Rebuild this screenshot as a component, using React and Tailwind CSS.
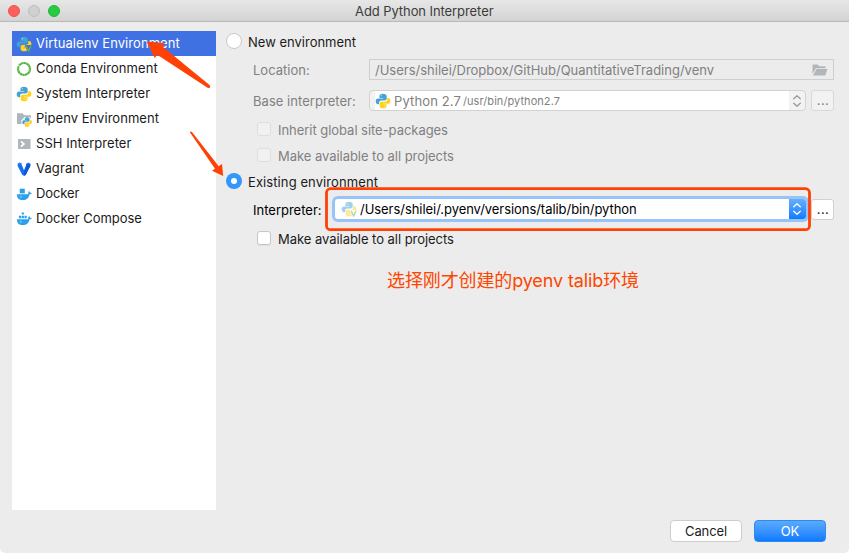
import React from "react";

function PythonShape() {
  return (
    <>
      <path
        fill="#43a3d6"
        d="M7.900 .8C5.500 .8 4.400 1.700 4.400 3.200V4.900h3.800v.5H3C1.500 5.400 .7 6.600 .7 8.300s.8 2.900 2.200 2.900h1.200V9.700c0-1.300.9-2.200 2.200-2.200h3.500c1.100 0 1.900-.8 1.900-1.900V3.200C11.700 1.700 10.400 .8 7.900 .8z"
      />
      <path
        fill="#ffd21f"
        d="M8.200 15.300c2.400 0 3.400-.9 3.400-2.400v-1.600H7.900v-.5h5.200c1.500 0 2.300-1.200 2.300-2.900s-.8-2.900-2.200-2.900h-1v1.600c0 1.300-.9 2.100-2.100 2.100H6.500c-1.100 0-1.900.8-1.900 1.900v2.300c0 1.500 1.200 2.400 3.600 2.400z"
      />
      <circle cx="6.300" cy="2.800" r=".5" fill="#fff" />
      <circle cx="9.800" cy="13.300" r=".5" fill="#fff" />
    </>
  );
}

function PythonIcon({ className = "size-4" }) {
  return (
    <svg viewBox="0 0 16 16" className={className}>
      <PythonShape />
    </svg>
  );
}

function VirtualenvIcon({ edge, className = "size-4" }) {
  return (
    <svg viewBox="0 0 16 16" className={className}>
      <PythonShape />
      <path d="M8.800 9H16v7h-4.500z" fill={edge} />
      <path d="M10.200 9.800l2.400 5.200L15 9.800" fill="none" stroke="#62b543" strokeWidth="1.400" />
    </svg>
  );
}

function CondaIcon() {
  return (
    <svg viewBox="0 0 16 16" className="size-4">
      <circle cx="8" cy="8" r="6" fill="none" stroke="#4fb53a" strokeWidth="2.200" />
      <circle cx="8" cy="8" r="6" fill="none" stroke="#fff" strokeOpacity=".55" strokeWidth="2.200" strokeDasharray=".5 2.200" />
      <path d="M1.800 4.300l3 1.500" stroke="#fff" strokeWidth=".9" />
    </svg>
  );
}

function PipenvIcon() {
  return (
    <svg viewBox="0 0 16 16" className="size-4">
      <path d="M1 2.200h5.500l1.700 2H15V13H1z" fill="#adb6bd" />
      <path d="M5.500 9.200L8.500 6h5l2.500 3v7H5.500z" fill="#fff" />
      <g transform="translate(5.800 5.800) scale(.66)">
        <PythonShape />
      </g>
    </svg>
  );
}

function SshIcon() {
  return (
    <svg viewBox="0 0 16 16" className="size-4">
      <path d="M2 3h12.500v10H2z" fill="#aeb7be" />
      <path d="M5 5.300L7.900 8l-2.900 2.600" fill="none" stroke="#fff" strokeWidth="1.700" />
    </svg>
  );
}

function VagrantIcon() {
  return (
    <svg viewBox="0 0 16 16" className="size-4">
      <path d="M1.700 2.700l2-1.100 2 1.100v1.100L8 9.200l2.300-5.400V2.700l2-1.100 2 1.100v2.200L9.700 14 8 14.700 6.300 14 1.700 4.900z" fill="#1570f2" />
      <path d="M10.300 2.700l2 1 2-1v2.200L9.700 14 8 14.700V11l2.300-6z" fill="#1159cf" />
      <path d="M1.700 2.700l2-1.100 2 1.100-2 1z" fill="#2c82ff" />
    </svg>
  );
}

function Whale({ children }) {
  return (
    <svg viewBox="0 0 16 16" className="size-4">
      <path
        fill="#2ba0ea"
        d="M.9 8.200h10.600c.9 0 1.100-.6.900-1.500l-.2-.9 1-.6c.6.400.9 1 .9 1.600.6-.1 1.200 0 1.700.3-.4 1-1.200 1.400-2.300 1.400-.8 3.700-2.800 5.500-6.800 5.500-3.800 0-5.800-1.800-5.800-5.800z"
      />
      <circle cx="4.800" cy="10.700" r=".9" fill="none" stroke="#a4d7f6" strokeWidth=".5" />
      {children}
    </svg>
  );
}

function DockerIcon() {
  return (
    <Whale>
      <path d="M3.700 2.700h5.100v4.700H3.700z" fill="#2ba0ea" />
    </Whale>
  );
}

function ComposeIcon() {
  return (
    <Whale>
      <path d="M5.700 1.400h2.200v2.100H5.700zM2.900 4.700h2.200v2.500H2.900zM5.700 4.700h2.200v2.500H5.700zM8.500 4.700h2.200v2.500H8.500z" fill="#2ba0ea" />
    </Whale>
  );
}

function Chevrons({ className }) {
  return (
    <svg viewBox="0 0 10 14" className={"h-[14px] w-[10px] shrink-0 " + className} fill="none" stroke="currentColor" strokeWidth="1.300" strokeLinecap="round" strokeLinejoin="round">
      <path d="M1.700 4.800L5 1.800 8.300 4.800M1.700 9.200L5 12.200 8.300 9.200" />
    </svg>
  );
}

const items = [
  { label: "Virtualenv Environment", icon: <VirtualenvIcon edge="#4071e3" />, active: true, spacing: "tracking-[0.06px]" },
  { label: "Conda Environment", icon: <CondaIcon />, spacing: "tracking-[0.06px]" },
  { label: "System Interpreter", icon: <PythonIcon />, spacing: "tracking-normal" },
  { label: "Pipenv Environment", icon: <PipenvIcon />, spacing: "tracking-[0.04px]" },
  { label: "SSH Interpreter", icon: <SshIcon />, spacing: "tracking-[0.04px]" },
  { label: "Vagrant", icon: <VagrantIcon />, spacing: "tracking-[0.1px]" },
  { label: "Docker", icon: <DockerIcon />, spacing: "tracking-[-0.1px]" },
  { label: "Docker Compose", icon: <ComposeIcon />, spacing: "tracking-[-0.05px]" },
];

function CheckRow({ label, disabled, className }) {
  return (
    <label className={"ml-[31px] flex h-5 items-center gap-[7px] tracking-[-0.04px] " + className + (disabled ? " text-[#808080]" : "")}>
      <span
        className={
          "size-[14px] rounded-[3px] border " +
          (disabled ? "border-[#dedede] bg-[#f1f1f1]" : "border-[#c6c6c6] bg-white shadow-[0_1px_1px_rgba(0,0,0,0.06)]")
        }
      />
      <span className="pt-px">{label}</span>
    </label>
  );
}

function MoreButton({ disabled }) {
  return (
    <button
      className={
        "flex h-[21px] w-[23px] items-center justify-center rounded-[3px] border text-[13px] leading-none tracking-[0.4px] " +
        (disabled ? "border-[#d8d8d8] bg-[#f2f2f2] text-[#808080]" : "border-[#d0d0d0] bg-white text-[#1b1b1b]")
      }
    >
      <span className="pb-px pl-px">...</span>
    </button>
  );
}

export default function App() {
  return (
    <div className="relative flex h-[553px] w-[849px] flex-col overflow-hidden rounded-b-[5px] bg-[#ececec] font-['Inter','Noto_Sans_CJK_SC',sans-serif] text-[13px] leading-5 text-[#1b1b1b]">
      <header className="relative flex h-[22px] shrink-0 items-center gap-2 border-b border-[#b9b9b9] bg-linear-to-b from-[#e7e7e7] to-[#d3d3d3] pl-2">
        <span className="size-3 rounded-full border border-[#e9544d] bg-[#fc605b]" />
        <span className="size-3 rounded-full border border-[#bcbcbc] bg-[#d0d0d0]" />
        <span className="size-3 rounded-full border border-[#1fb637] bg-[#26cb42]" />
        <h1 className="ml-[287px] whitespace-nowrap pt-px text-[13px] tracking-[-0.08px] text-[#3c3c3c]">Add Python Interpreter</h1>
      </header>

      <div className="flex h-[488px] shrink-0 pl-3 pt-[9px]">
        <nav className="h-[479px] w-[204px] shrink-0 bg-white">
          {items.map((item) => (
            <div
              key={item.label}
              className={"flex h-[25px] items-center gap-1 whitespace-nowrap pl-1 " + (item.active ? "bg-[#4071e3] text-white" : "")}
            >
              {item.icon}
              <span className={"pb-px " + item.spacing}>{item.label}</span>
            </div>
          ))}
        </nav>

        <main className="ml-[10px] flex w-[608px] flex-col whitespace-nowrap">
          <label className="flex h-5 items-center gap-[6px]">
            <span className="size-4 rounded-full border border-[#c8c8c8] bg-white" />
            <span className="pt-px">New environment</span>
          </label>

          <div className="mt-2 flex h-[21px] items-center pl-[27px] text-[#808080]">
            <span className="w-[116px]">Location:</span>
            <div className="flex h-[21px] w-[465px] items-center justify-between border border-[#cfcfcf] pl-[5px] pr-[5px]">
              <span>/Users/shilei/Dropbox/GitHub/QuantitativeTrading/venv</span>
              <svg viewBox="0 0 16 12" className="h-3 w-4">
                <path d="M.5 .5h5.200l1.500 1.700h6.300v2H4L.5 10z" fill="#b1b6ba" />
                <path d="M4.500 5h11l-2.300 6.400H1z" fill="#b1b6ba" />
              </svg>
            </div>
          </div>

          <div className="mt-[10px] flex h-[21px] items-center pl-[27px] text-[#808080]">
            <span className="w-[116px] tracking-[0.04px]">Base interpreter:</span>
            <div className="flex h-[21px] w-[437px] items-center overflow-hidden rounded-[4px] border border-[#d2d2d2] bg-[#f2f2f2]">
              <div className="ml-[5px] flex h-full w-[414px] items-center bg-white">
                <PythonIcon />
                <span className="ml-[3px] tracking-[0.13px]">Python 2.7</span>
                <span className="ml-[2px] pt-px text-[11px] tracking-[0.06px]">/usr/bin/python2.7</span>
              </div>
              <Chevrons className="ml-[3px] text-[#999]" />
            </div>
            <span className="w-[5px]" />
            <MoreButton disabled />
          </div>

          <CheckRow label="Inherit global site-packages" disabled className="mt-2" />
          <CheckRow label="Make available to all projects" disabled className="mt-[6px]" />

          <label className="mt-[6px] flex h-5 items-center gap-[6px]">
            <span className="flex size-4 items-center justify-center rounded-full bg-[#3296fb]">
              <span className="size-[6px] rounded-full bg-white" />
            </span>
            <span className="pt-px tracking-[0.09px]">Existing environment</span>
          </label>

          <div className="mt-2 flex h-[21px] items-center pl-[27px]">
            <span className="w-[82px] text-black">Interpreter:</span>
            <div className="mb-px flex h-5 w-[471px] items-center rounded-[3px] bg-white shadow-[0_0_0_3px_#98c3f8]">
              <div className="flex h-full w-[454px] items-center pl-[6px] text-black">
                <VirtualenvIcon edge="#ffffff" className="size-4 opacity-50" />
                <span className="ml-[3px] tracking-[-0.05px]">/Users/shilei/.pyenv/versions/talib/bin/python</span>
              </div>
              <div className="flex h-full w-[17px] items-center justify-center rounded-r-[3px] bg-linear-to-b from-[#62affc] to-[#0a7bff] pr-px">
                <Chevrons className="text-white" />
              </div>
            </div>
            <span className="w-[5px]" />
            <MoreButton />
          </div>

          <CheckRow label="Make available to all projects" className="mt-2" />

          <p className="ml-[161px] mt-[20px] text-[18px] leading-[26px] tracking-[-0.12px] text-[#ff4500]">选择刚才创建的pyenv talib环境</p>
        </main>
      </div>

      <footer className="mt-[10px] flex justify-end gap-3 pr-[23px]">
        <button className="h-[22px] w-[72px] rounded-[4px] border border-[#cdcdcd] bg-white text-[13px] leading-5 tracking-[-0.1px]">Cancel</button>
        <button className="h-[22px] w-[72px] rounded-[4px] border border-[#2b8bf6] bg-linear-to-b from-[#5aabfc] to-[#0a7aff] text-[13px] leading-5 text-white">OK</button>
      </footer>

      <svg viewBox="0 0 849 553" className="pointer-events-none absolute inset-0 h-[553px] w-[849px]">
        <rect x="326.500" y="188.700" width="483" height="41" rx="4" fill="none" stroke="#ff4106" strokeWidth="2.800" />
        <path d="M146.500 41.500L165 43.200 162.800 46.700 209.800 85.200Q211 88 208 88L157.200 54.800 154.700 58z" fill="#ff4106" />
        <path d="M190 132.500Q190.500 131 192 132L218.700 166.200 222 164 223.200 176 212 170.800 215 168.700z" fill="#ff4106" />
      </svg>
    </div>
  );
}
